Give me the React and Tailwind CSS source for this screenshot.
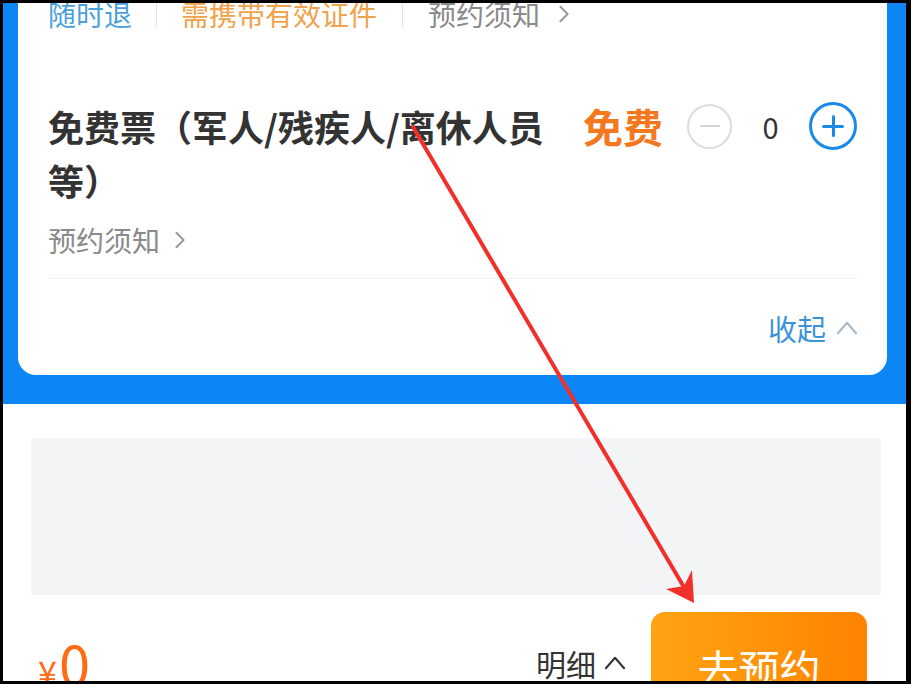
import React from 'react';

const font = { fontFamily: '"Noto Sans CJK SC", "Noto Sans", sans-serif' };

function Chevron({ className }) {
  return (
    <svg viewBox="0 0 20 20" className={className} fill="none" stroke="currentColor" strokeWidth="1.6" strokeLinecap="round" strokeLinejoin="round">
      <polyline points="7,4 13,10 7,16" />
    </svg>
  );
}

function ChevronUp({ className }) {
  return (
    <svg viewBox="0 0 20 20" className={className} fill="none" stroke="currentColor" strokeWidth="1.6" strokeLinecap="round" strokeLinejoin="round">
      <polyline points="3,14 10,6 17,14" />
    </svg>
  );
}

function Stepper() {
  return (
    <div className="flex items-center">
      <div className="flex h-[45px] w-[45px] items-center justify-center rounded-full border-[2px] border-[#dcdcdc]">
        <div className="h-[2px] w-[20px] rounded bg-[#d4d4d4]" />
      </div>
      <div className="w-[77px] text-center text-[29px] leading-none text-[#333]">0</div>
      <div className="relative flex h-[48px] w-[48px] items-center justify-center rounded-full border-[3px] border-[#1a8ae8]">
        <div className="absolute h-[3px] w-[22px] rounded bg-[#1a8ae8]" />
        <div className="absolute h-[22px] w-[3px] rounded bg-[#1a8ae8]" />
      </div>
    </div>
  );
}

export default function App() {
  return (
    <div className="relative h-[684px] w-[911px] overflow-hidden bg-black pt-[3px] pl-[3px] pr-[5px] pb-[3px]" style={font}>
      <div className="h-full overflow-hidden bg-white">
        <div className="bg-[#0b86f4] pl-[15px] pr-[19px] pb-[29px]">
          <div className="-mt-[9px] rounded-b-[18px] bg-white px-[30px] pb-[27px]">
            <div className="flex h-[40px] items-center text-[28px] leading-[40px]">
              <span className="text-[#4b9fdc]">随时退</span>
              <span className="mx-[24px] h-[26px] w-px bg-[#e2e2e2]" />
              <span className="text-[#f0a24c]">需携带有效证件</span>
              <span className="mx-[25px] h-[26px] w-px bg-[#e2e2e2]" />
              <span className="text-[#8a8a8a]">预约须知</span>
              <Chevron className="ml-[12px] h-[24px] w-[24px] text-[#999]" />
            </div>

            <div className="mt-[65px] flex items-start">
              <div className="w-[515px] text-[36px] font-bold leading-[54px] text-[#333]">
                免费票（军人/残疾人/离休人员等）
              </div>
              <div className="ml-[20px] flex h-[54px] items-center">
                <span className="text-[40px] font-bold leading-none text-[#f5781e]">免费</span>
                <div className="ml-[24px]">
                  <Stepper />
                </div>
              </div>
            </div>

            <div className="mt-[13px] flex h-[40px] items-center text-[28px] leading-[40px] text-[#8a8a8a]">
              <span>预约须知</span>
              <Chevron className="ml-[8px] h-[24px] w-[24px] text-[#999]" />
            </div>

            <div className="mt-[18px] border-t border-[#f0f0f0]" />

            <div className="mt-[29px] flex h-[40px] items-center justify-end text-[29px] leading-[40px] text-[#3b93d6]">
              <span>收起</span>
              <ChevronUp className="ml-[8px] mr-[-3px] h-[26px] w-[26px] text-[#a8b8c8]" />
            </div>
          </div>
        </div>

        <div className="ml-[28px] mr-[25px] mt-[34px] h-[157px] rounded-[3px] bg-[#f3f4f6]" />

        <div className="mt-[17px] flex items-start pl-[35px] pr-[39px]">
          <div className="mt-[22px] flex items-baseline text-[#ff6a13]">
            <span className="text-[34px] leading-none">¥</span>
            <span className="ml-[2px] text-[56px] leading-none">0</span>
          </div>
          <div className="flex-1" />
          <div className="mt-[31px] flex items-center text-[30px] leading-[40px] text-[#333]">
            <span>明细</span>
            <ChevronUp className="ml-[6px] h-[26px] w-[26px] text-[#333]" />
          </div>
          <div className="ml-[23px] h-[100px] w-[216px] rounded-[14px] bg-gradient-to-r from-[#ffa412] to-[#ff8200] pt-[31px] text-center text-[41px] leading-[48px] text-white">
            去预约
          </div>
        </div>
      </div>

      <svg className="pointer-events-none absolute inset-0" width="911" height="684" viewBox="0 0 911 684">
        <line x1="413" y1="127" x2="688" y2="594" stroke="#f2302b" strokeWidth="4" strokeLinecap="round" />
        <polygon points="694,603 666,589 684,586 692,570" fill="#f2302b" />
      </svg>
    </div>
  );
}
